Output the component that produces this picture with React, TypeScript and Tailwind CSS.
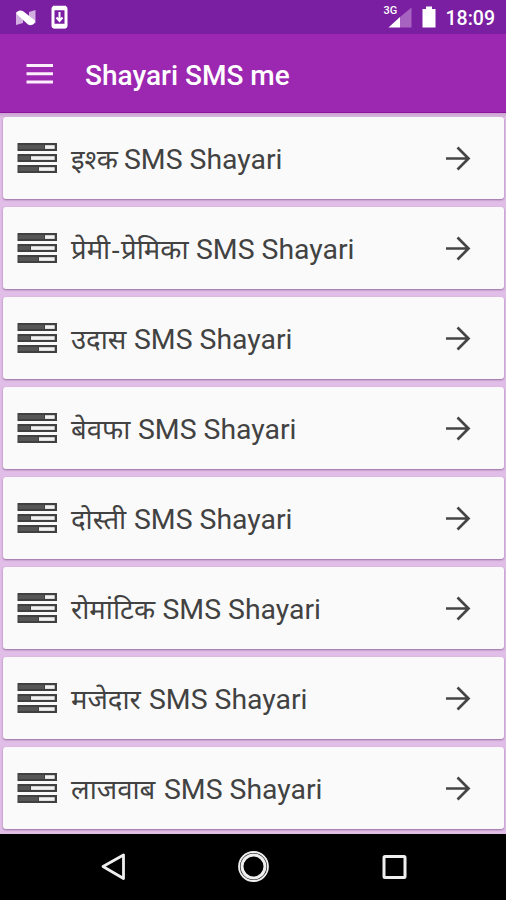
type Item = { hindi: string[]; width: string };

const items: Item[] = [
  { hindi: ['इश्क'], width: 'w-[46px]' },
  { hindi: ['प्रेमी', 'प्रेमिका'], width: 'w-[118px]' },
  { hindi: ['उदास'], width: 'w-[56px]' },
  { hindi: ['बेवफा'], width: 'w-[60px]' },
  { hindi: ['दोस्ती'], width: 'w-[56px]' },
  { hindi: ['रोमांटिक'], width: 'w-[84.5px]' },
  { hindi: ['मजेदार'], width: 'w-[71px]' },
  { hindi: ['लाजवाब'], width: 'w-[86px]' },
];

function ListIcon() {
  return (
    <svg width="40" height="32" viewBox="0 0 40 32" className="shrink-0">
      {[
        { y: 1, x: 28 },
        { y: 12, x: 14 },
        { y: 23, x: 22 },
      ].map((r) => (
        <g key={r.y}>
          <rect x="0.5" y={r.y} width="39.5" height="8" fill="#404040" />
          <rect x="1.5" y={r.y + 2} width={r.x - 2.5} height="4" fill="#565656" />
          <rect x={r.x} y={r.y + 2.2} width={37.7 - r.x} height="3.7" fill="#f2f2f2" />
        </g>
      ))}
    </svg>
  );
}

function StatusBar() {
  return (
    <div className="flex h-[34px] shrink-0 items-center bg-[#7b1fa2] text-white">
      <svg width="80" height="34" viewBox="0 0 80 34">
        <path d="M16 12l7-1v12l-7 2zM29 12l6.500-2v13L29 24z" fill="#d2aee0" />
        <path d="M16.500 14c0-3.500 4-4.500 7-2.500L35 20.500c.5 3.500-4 6-7 4z" fill="#fff" />
        <rect x="53" y="7.500" width="13" height="19.500" rx="1.500" fill="none" stroke="#fff" strokeWidth="3" />
        <path d="M53 8h13M53 26h13" stroke="#fff" strokeWidth="4.500" />
        <path d="M59.500 12v8M56.500 17.500l3 3.500 3-3.500" fill="none" stroke="#fff" strokeWidth="2" />
      </svg>
      <div className="relative ml-auto h-[34px] w-[32px]">
        <svg width="32" height="34" viewBox="0 0 32 34">
          <path d="M8.500 27.500L20 17v10.500z" fill="#fff" />
          <path d="M20 17L31.500 7.500v20H20z" fill="#a663c0" />
        </svg>
        <span className="absolute left-[4px] top-[5px] text-[11px] font-medium leading-[11px]">3G</span>
      </div>
      <svg width="14" height="34" viewBox="0 0 14 34" className="ml-[10px]">
        <path d="M.5 9H4V6.500h6V9h3.500v18.500H.5z" fill="#fff" />
      </svg>
      <span className="ml-[10px] mr-[11px] mt-[3px] text-[19.5px] font-medium leading-[24px]">18:09</span>
    </div>
  );
}

export default function App() {
  return (
    <div className="flex h-[900px] w-[506px] flex-col overflow-hidden bg-[#e1bee7] font-['Roboto','Noto_Sans',sans-serif]">
      <StatusBar />
      <header className="flex h-[79px] shrink-0 items-center border-b border-[#8f139f] bg-[#9c27b0] text-white">
        <svg width="27" height="20" viewBox="0 0 27 20" className="ml-[26px] mt-px">
          <path d="M.5 1.500h27M.5 9.800h27M.5 18h27" stroke="#fbeefd" strokeWidth="3" />
        </svg>
        <h1 className="ml-8 mt-[5px] whitespace-nowrap text-[28px] font-medium leading-8">Shayari SMS me</h1>
      </header>
      <main className="flex h-[721px] shrink-0 flex-col gap-2 bg-[linear-gradient(#c6a2cc,#e1bee7_5px)] pl-[3px] pr-[2px] pt-1">
        {items.map((item) => (
          <div
            key={item.hindi[0]}
            className="flex h-[82px] shrink-0 items-center rounded-[3px] bg-[#fafafa] pl-[14px] shadow-[0_1px_2px_rgba(80,30,95,0.5)]"
          >
            <ListIcon />
            <div className="ml-[14px] mt-[3px] flex items-baseline whitespace-nowrap text-[28.4px] leading-10 text-[#424242]">
              <span className={'mr-[7px] text-[27.5px] ' + item.width}>
                {item.hindi[0]}
                {item.hindi[1] && (
                  <>
                    <span className="mx-[1px] font-['Noto_Sans',sans-serif]">-</span>
                    {item.hindi[1]}
                  </>
                )}
              </span>
              <span>SMS Shayari</span>
            </div>
            <svg width="26" height="26" viewBox="0 0 26 26" className="ml-auto mr-[33px]">
              <path d="M1 13.500h22M12.500 2.500l11 11-11 11" fill="none" stroke="#454545" strokeWidth="2.700" />
            </svg>
          </div>
        ))}
      </main>
      <nav className="flex h-[66px] shrink-0 items-center bg-black">
        <svg width="506" height="66" viewBox="0 0 506 66" fill="none" stroke="#efefef">
          <path d="M103 32.500L123.500 21v23.500z" strokeWidth="2.800" strokeLinejoin="round" />
          <circle cx="253.500" cy="32.500" r="14.500" strokeWidth="1.800" />
          <circle cx="253.500" cy="32.500" r="11.500" strokeWidth="3" />
          <rect x="384" y="22.500" width="21" height="21" rx="1" strokeWidth="3" />
        </svg>
      </nav>
    </div>
  );
}
